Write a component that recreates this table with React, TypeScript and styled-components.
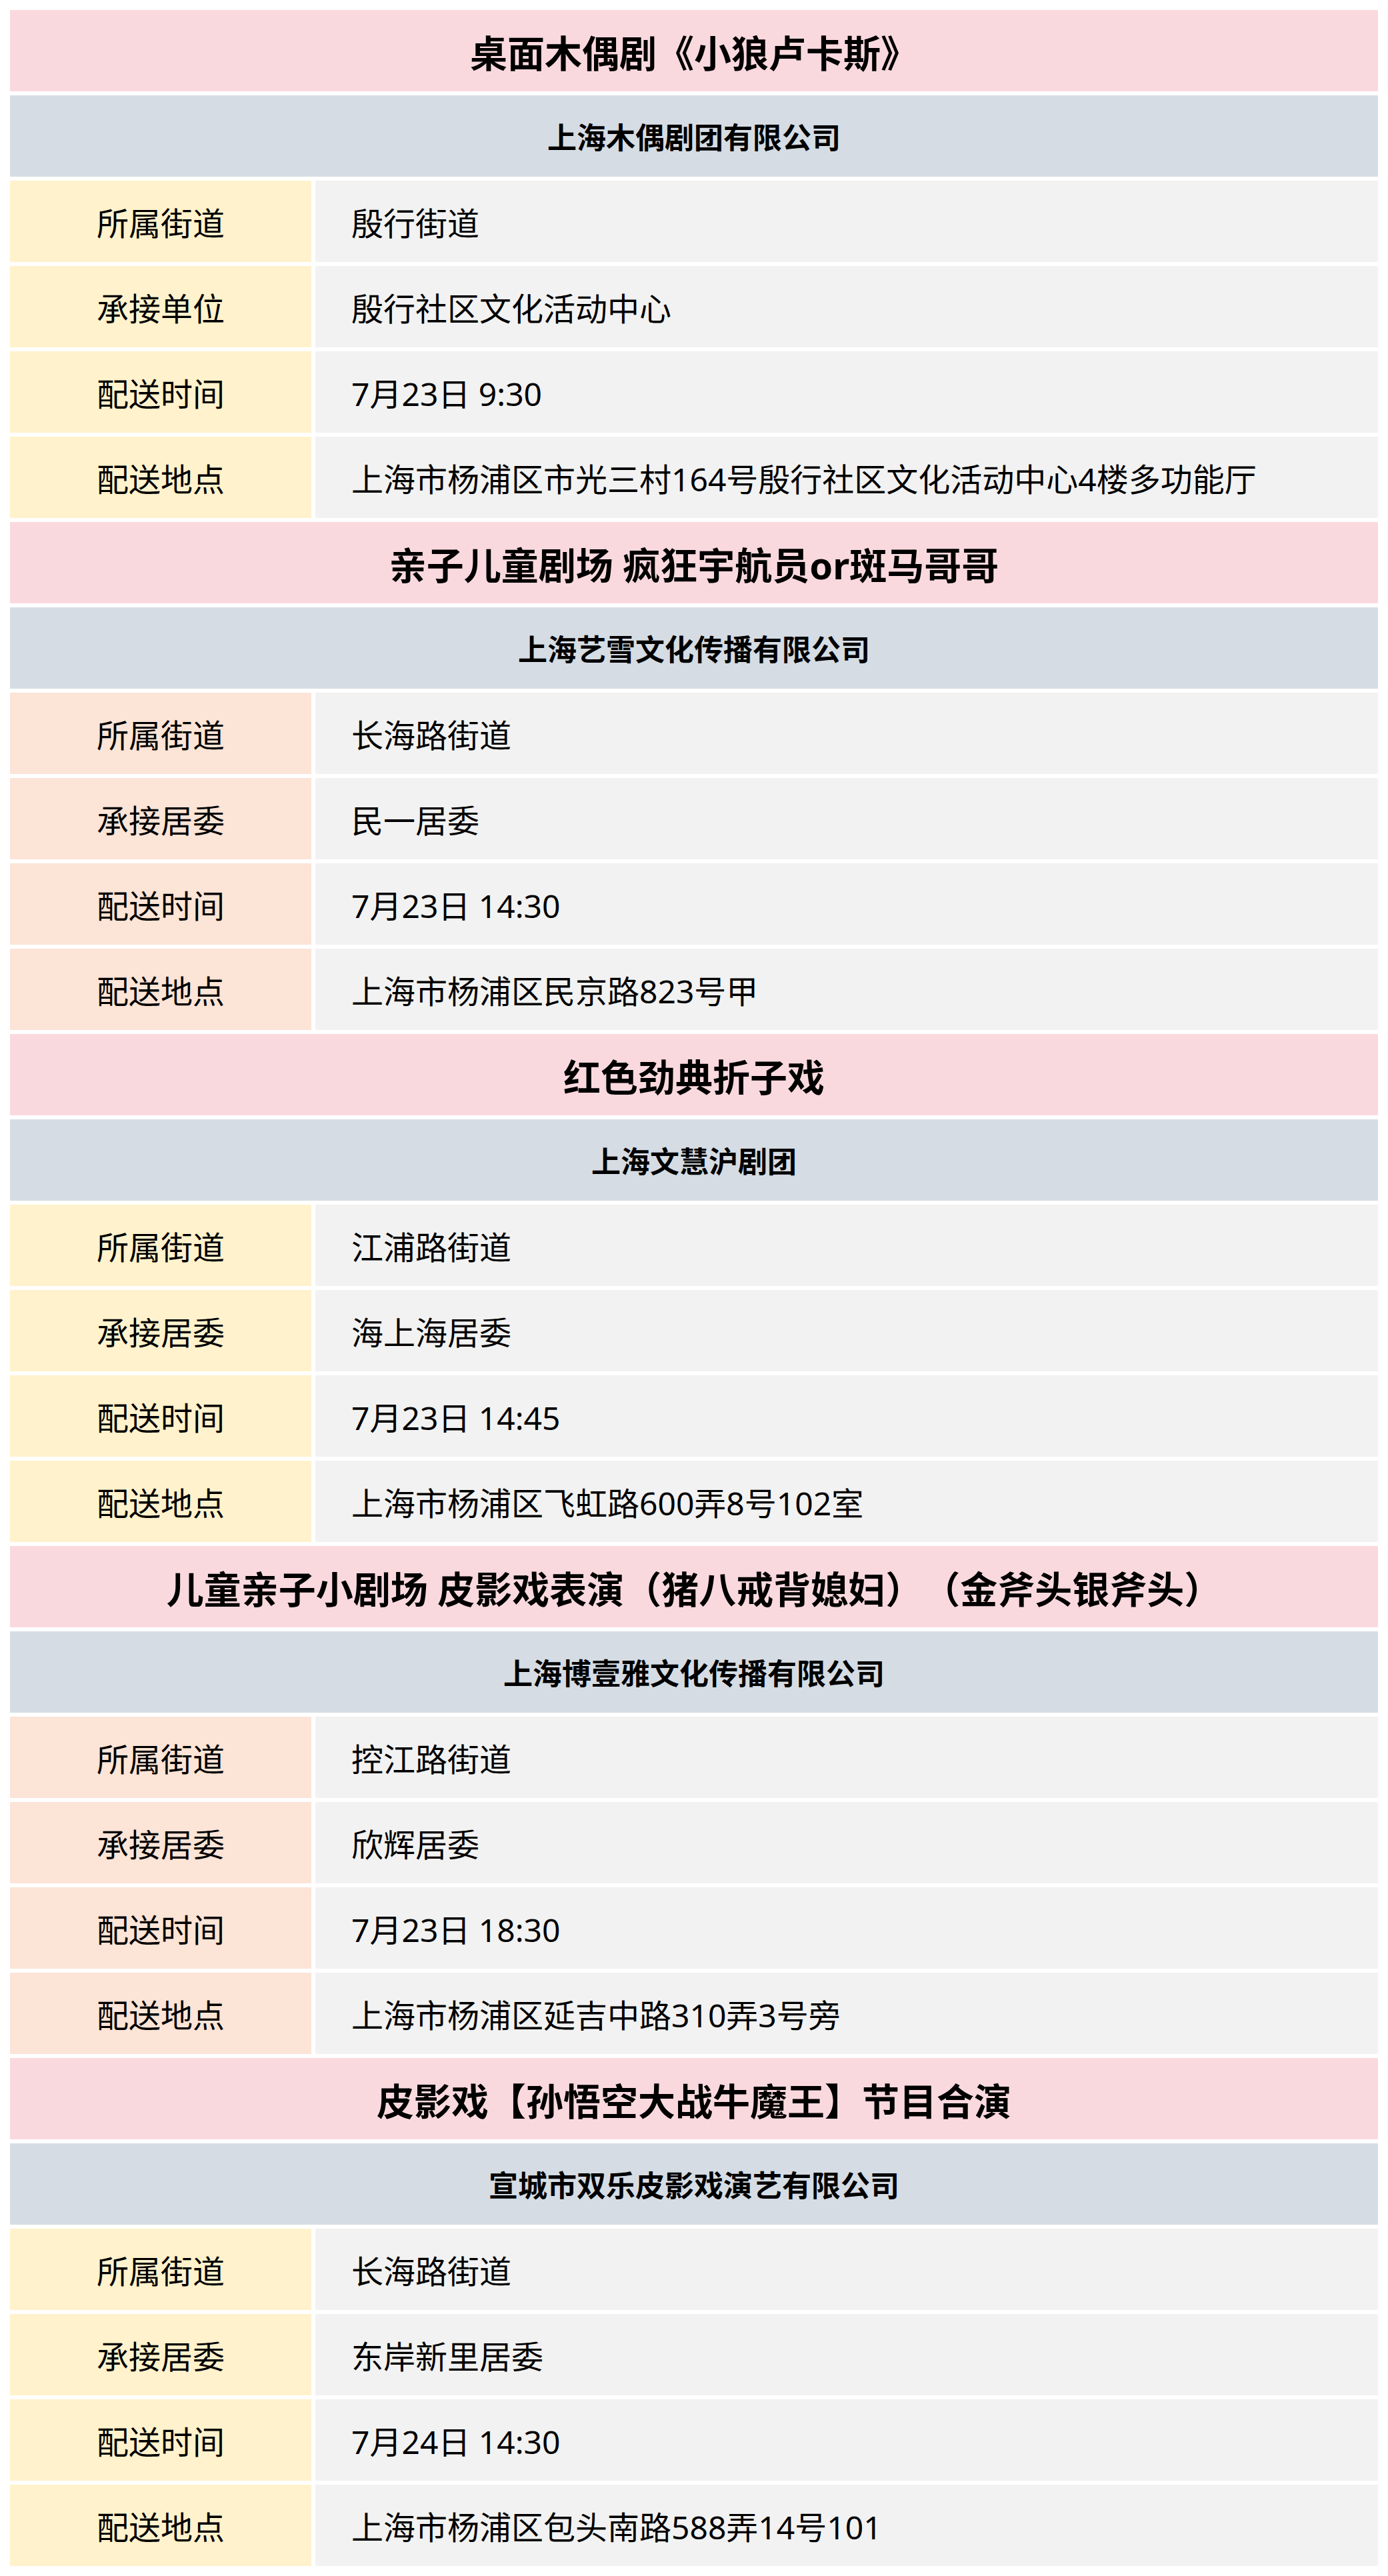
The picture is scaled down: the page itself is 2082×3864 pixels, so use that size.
import React from 'react';
import styled, { createGlobalStyle } from 'styled-components';

const GlobalStyle = createGlobalStyle`
  html, body {
    margin: 0;
    padding: 0;
    background: #ffffff;
  }
  body {
    font-family: "Noto Sans", "Noto Sans CJK SC", sans-serif;
    color: #000000;
    text-spacing-trim: space-all;
  }
`;

type Tone = 'yellow' | 'peach';

interface Show {
  title: string;
  company: string;
  tone: Tone;
  rows: [string, string][];
}

const shows: Show[] = [
  {
    title: '桌面木偶剧《小狼卢卡斯》',
    company: '上海木偶剧团有限公司',
    tone: 'yellow',
    rows: [
      ['所属街道', '殷行街道'],
      ['承接单位', '殷行社区文化活动中心'],
      ['配送时间', '7月23日 9:30'],
      ['配送地点', '上海市杨浦区市光三村164号殷行社区文化活动中心4楼多功能厅'],
    ],
  },
  {
    title: '亲子儿童剧场 疯狂宇航员or斑马哥哥',
    company: '上海艺雪文化传播有限公司',
    tone: 'peach',
    rows: [
      ['所属街道', '长海路街道'],
      ['承接居委', '民一居委'],
      ['配送时间', '7月23日 14:30'],
      ['配送地点', '上海市杨浦区民京路823号甲'],
    ],
  },
  {
    title: '红色劲典折子戏',
    company: '上海文慧沪剧团',
    tone: 'yellow',
    rows: [
      ['所属街道', '江浦路街道'],
      ['承接居委', '海上海居委'],
      ['配送时间', '7月23日 14:45'],
      ['配送地点', '上海市杨浦区飞虹路600弄8号102室'],
    ],
  },
  {
    title: '儿童亲子小剧场 皮影戏表演（猪八戒背媳妇）（金斧头银斧头）',
    company: '上海博壹雅文化传播有限公司',
    tone: 'peach',
    rows: [
      ['所属街道', '控江路街道'],
      ['承接居委', '欣辉居委'],
      ['配送时间', '7月23日 18:30'],
      ['配送地点', '上海市杨浦区延吉中路310弄3号旁'],
    ],
  },
  {
    title: '皮影戏【孙悟空大战牛魔王】节目合演',
    company: '宣城市双乐皮影戏演艺有限公司',
    tone: 'yellow',
    rows: [
      ['所属街道', '长海路街道'],
      ['承接居委', '东岸新里居委'],
      ['配送时间', '7月24日 14:30'],
      ['配送地点', '上海市杨浦区包头南路588弄14号101'],
    ],
  },
];

const toneColors: Record<Tone, string> = {
  yellow: '#fff2cc',
  peach: '#fce4d6',
};

const Page = styled.main`
  display: flex;
  flex-direction: column;
  gap: 6px;
  padding: 15px;
`;

const TitleRow = styled.div`
  height: 122px;
  display: flex;
  align-items: center;
  justify-content: center;
  background: #f9d9de;
  font-size: 56px;
  font-weight: 700;
  white-space: nowrap;
  text-spacing-trim: space-all;
`;

const CompanyRow = styled.div`
  height: 122px;
  display: flex;
  align-items: center;
  justify-content: center;
  background: #d5dce4;
  font-size: 44px;
  font-weight: 700;
  white-space: nowrap;
`;

const InfoRow = styled.div`
  height: 122px;
  display: grid;
  grid-template-columns: 452px 1fr;
  gap: 6px;
`;

const LabelCell = styled.div<{ $tone: Tone }>`
  display: flex;
  align-items: center;
  justify-content: center;
  background: ${({ $tone }) => toneColors[$tone]};
  font-size: 48px;
  white-space: nowrap;
`;

const ValueCell = styled.div`
  display: flex;
  align-items: center;
  padding-left: 54px;
  background: #f2f2f2;
  font-size: 48px;
  white-space: nowrap;
`;

export default function App() {
  return (
    <>
      <GlobalStyle />
      <Page>
        {shows.map((show) => (
          <React.Fragment key={show.title}>
            <TitleRow>{show.title}</TitleRow>
            <CompanyRow>{show.company}</CompanyRow>
            {show.rows.map(([label, value]) => (
              <InfoRow key={label}>
                <LabelCell $tone={show.tone}>{label}</LabelCell>
                <ValueCell>{value}</ValueCell>
              </InfoRow>
            ))}
          </React.Fragment>
        ))}
      </Page>
    </>
  );
}
